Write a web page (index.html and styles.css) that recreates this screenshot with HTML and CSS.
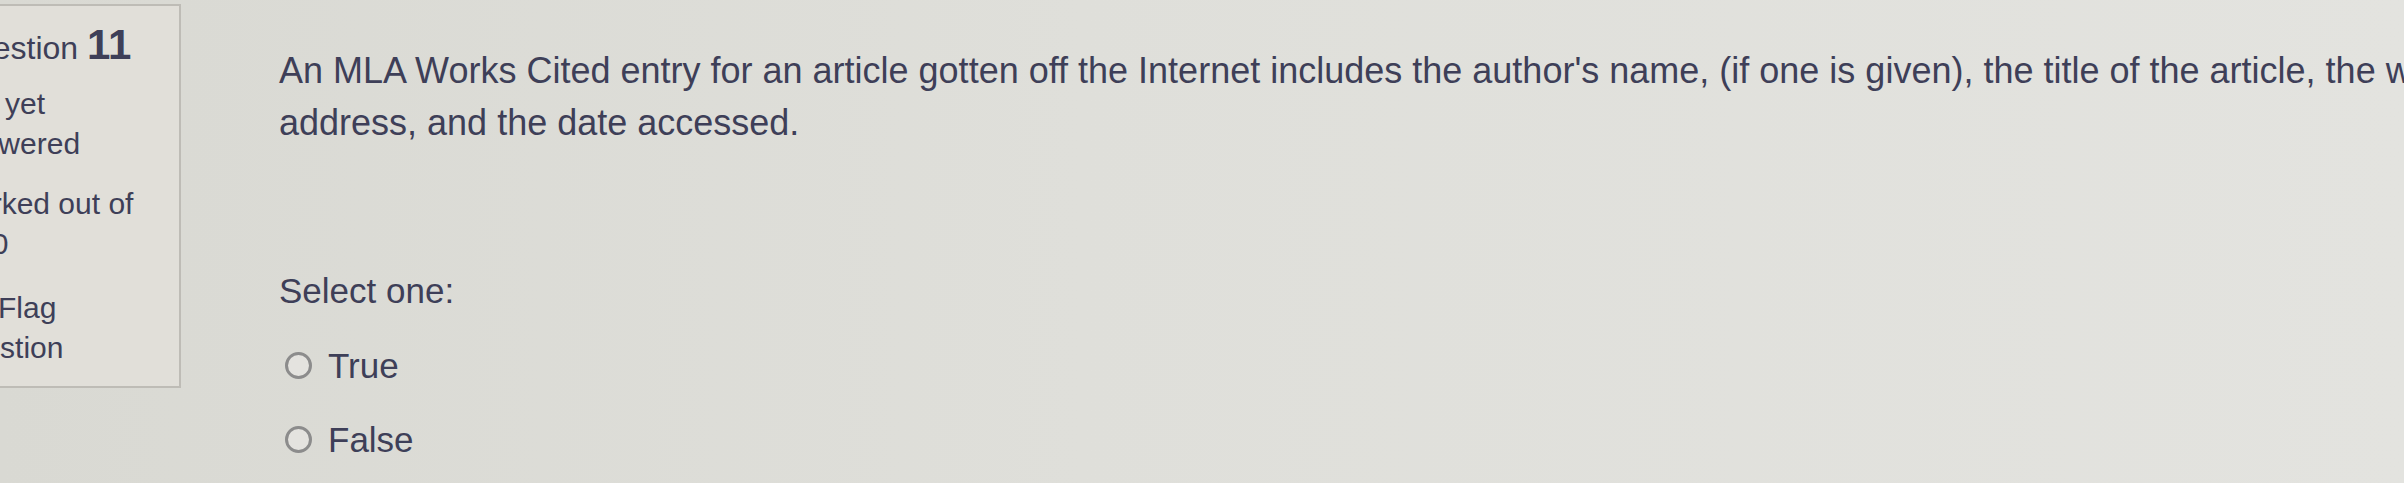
FILE: index.html
```html
<!DOCTYPE html>
<html lang="en">
<head>
  <meta charset="UTF-8">
  <meta name="viewport" content="width=device-width, initial-scale=1.0">
  <title>Quiz - Question 11</title>
  <link rel="stylesheet" href="styles.css">
</head>
<body>
  <div class="que">
    <div class="info">
      <h3 class="no">Question <span class="qno">11</span></h3>
      <div class="state">Not yet answered</div>
      <div class="grade">Marked out of 1.00</div>
      <div class="flag">
        <svg class="flag-icon" viewBox="0 0 16 16" width="28" height="28">
          <path d="M3 1v14M3 2h9l-2 3 2 3H3" fill="none" stroke="#666" stroke-width="1.5"/>
        </svg>Flag question
      </div>
    </div>

    <div class="content">
      <div class="qtext">
        An MLA Works Cited entry for an article gotten off the Internet includes the author's name, (if one is given), the title of the article, the web address, and the date accessed.
      </div>
      <div class="ablock">
        <div class="prompt">Select one:</div>
        <div class="answer">
          <label class="option"><input type="radio" name="q11" value="1"><span class="radio"></span>True</label>
          <label class="option"><input type="radio" name="q11" value="0"><span class="radio"></span>False</label>
        </div>
      </div>
    </div>
  </div>
</body>
</html>
```

FILE: styles.css
```css
* {
  margin: 0; padding: 0; box-sizing: border-box;
}
body {
  width: 2404px; height: 483px;
  overflow: hidden;
  background: linear-gradient(90deg, #d9d9d3 0%, #dfdfda 45%, #e3e3df 100%);
  font-family: "Liberation Sans", Arial, sans-serif;
  color: #3e3f58;
}
.que {
  display: flex;
  align-items: flex-start;
}

/* left column with the question status */
.info {
  flex: none;
  margin-top: 4px;
  margin-left: -66px;
  width: 247px; height: 384px;
  padding: 14px 22px 0 14px;
  background: #e1dfd9;
  border: 2px solid #bebcb6;
  font-size: 30px;
  line-height: 40px;
}
.info .no {
  font-weight: normal;
  font-size: 32px;
  line-height: 50px;
  margin-bottom: 11px;
  white-space: nowrap;
}
.info .qno {
  font-size: 42px;
  font-weight: bold;
}
.info .state {
  margin-bottom: 20px;
}
.info .grade {
  margin-bottom: 24px;
}
.flag-icon {
  vertical-align: middle;
  margin-right: 20px;
}

/* question body */
.content {
  flex: none;
  margin-left: 98px;
  margin-top: 45px;
}
.qtext {
  width: 2200px;
  font-size: 36px;
  line-height: 52px;
}
.ablock {
  margin-top: 116px;
  font-size: 35px;
  line-height: 52px;
}
.answer {
  padding-left: 6px;
  margin-top: 23px;
}
.option {
  display: flex;
  align-items: center;
  height: 52px;
  margin-bottom: 22px;
}
.option input {
  display: none;
}
.radio {
  width: 27px; height: 27px;
  border: 3px solid #8c8c8c;
  border-radius: 50%;
  background: #e4e3df;
  margin-right: 16px;
  margin-top: -2px;
}
```
